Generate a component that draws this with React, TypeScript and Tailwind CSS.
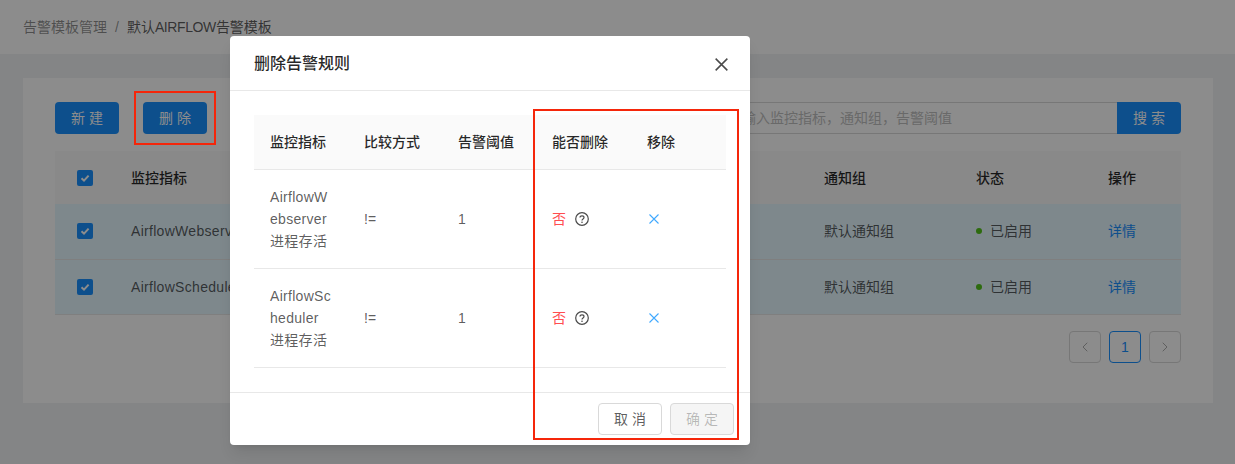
import { ChevronLeft, ChevronRight } from "lucide-react"

const font = { fontFamily: '"Liberation Sans", "Noto Sans CJK SC", sans-serif' }

const pageRows = ["AirflowWebserver", "AirflowScheduler"]

const dialogRows = [
  { lines: ["AirflowW", "ebserver", "进程存活"] },
  { lines: ["AirflowSc", "heduler", "进程存活"] },
]

function Checkbox() {
  return (
    <span className="flex h-4 w-4 items-center justify-center rounded-[2px] bg-[#1890ff]">
      <svg width="12" height="12" viewBox="0 0 12 12" fill="none">
        <path d="M2.5 6.2 5 8.6 9.6 3.6" stroke="white" strokeWidth="2" />
      </svg>
    </span>
  )
}

function HelpIcon() {
  return (
    <svg width="14" height="14" viewBox="0 0 14 14" fill="none" stroke="#4a4a4a" strokeWidth="1.2">
      <circle cx="7" cy="7" r="6.3" />
      <path d="M5 5.6C5 4.5 5.9 3.8 7 3.8s2 .7 2 1.8c0 1.5-2 1.4-2 3" />
      <circle cx="7" cy="10.2" r=".8" fill="#4a4a4a" stroke="none" />
    </svg>
  )
}

function CloseIcon({ size, color, weight }: { size: number; color: string; weight: number }) {
  return (
    <svg width={size} height={size} viewBox="0 0 12 12" fill="none" stroke={color} strokeWidth={weight}>
      <path d="M.6.6 11.4 11.4M11.4.6.6 11.4" />
    </svg>
  )
}

export default function App() {
  return (
    <div className="relative h-[464px] overflow-hidden bg-[#f0f2f5] text-sm text-black/65" style={font}>
      {/* Breadcrumb */}
      <div className="flex h-[54px] items-center bg-white pl-[23px]">
        <span className="text-black/45">告警模板管理</span>
        <span className="mx-2 text-black/45">/</span>
        <span>
          默认<span className="tracking-[-0.4px]">AIRFLOW</span>告警模板
        </span>
      </div>

      {/* Card */}
      <div className="mt-6 ml-[23px] mr-[22px] bg-white px-8 pt-6 pb-10">
        <div className="flex items-center justify-between">
          <div className="flex gap-6">
            <button className="h-8 w-16 rounded bg-[#1890ff] text-white">新 建</button>
            <button className="h-8 w-16 rounded bg-[#1890ff] text-white">删 除</button>
          </div>
          <div className="flex">
            <div className="flex h-8 w-[401px] items-center rounded-l border border-r-0 border-[#d9d9d9] pl-[11px] text-[#bfbfbf]">
              请输入监控指标，通知组，告警阈值
            </div>
            <button className="h-8 w-16 rounded-r bg-[#1890ff] text-white">搜 索</button>
          </div>
        </div>

        <table className="mt-[17px] w-full table-fixed border-collapse">
          <colgroup>
            <col className="w-[60px]" />
            <col />
            <col className="w-[152px]" />
            <col className="w-[132px]" />
            <col className="w-[89px]" />
          </colgroup>
          <thead>
            <tr className="h-[53px] bg-[#fafafa] text-left text-black/85">
              <th className="px-0 font-medium">
                <div className="flex justify-center"><Checkbox /></div>
              </th>
              <th className="px-4 font-medium">监控指标</th>
              <th className="px-4 font-medium">通知组</th>
              <th className="px-4 font-medium">状态</th>
              <th className="px-4 font-medium">操作</th>
            </tr>
          </thead>
          <tbody>
            {pageRows.map((name) => (
              <tr key={name} className="h-[55px] border-b border-[#e8e8e8] bg-[#e6f7ff]">
                <td>
                  <div className="flex justify-center"><Checkbox /></div>
                </td>
                <td className="px-4 tracking-[0.3px]">{name}</td>
                <td className="px-4">默认通知组</td>
                <td className="px-4">
                  <span className="flex items-center gap-2">
                    <span className="h-1.5 w-1.5 rounded-full bg-[#52c41a]" />
                    已启用
                  </span>
                </td>
                <td className="px-4 text-[#1890ff]">详情</td>
              </tr>
            ))}
          </tbody>
        </table>

        <div className="mt-4 flex justify-end gap-2">
          <span className="flex h-8 w-8 items-center justify-center rounded border border-[#d9d9d9] text-black/35">
            <ChevronLeft size={16} strokeWidth={1.4} />
          </span>
          <span className="flex h-8 w-8 items-center justify-center rounded border border-[#1890ff] text-[#1890ff]">1</span>
          <span className="flex h-8 w-8 items-center justify-center rounded border border-[#d9d9d9] text-black/35">
            <ChevronRight size={16} strokeWidth={1.4} />
          </span>
        </div>
      </div>

      {/* Mask */}
      <div className="absolute inset-0 bg-black/45" />

      {/* Dialog */}
      <div className="absolute top-9 left-[230px] w-[520px] rounded bg-white shadow-lg">
        <div className="flex h-[55px] items-center justify-between border-b border-[#e8e8e8] pt-[2px] pl-6 pr-[22px]">
          <span className="text-base font-medium text-black/85">删除告警规则</span>
          <CloseIcon size={13} color="#4a4a4a" weight={1.4} />
        </div>

        <div className="px-6 pt-6 pb-6">
          <table className="w-full table-fixed border-collapse">
            <colgroup>
              <col className="w-[94px]" />
              <col className="w-[94px]" />
              <col className="w-[94px]" />
              <col className="w-[95px]" />
              <col />
            </colgroup>
            <thead>
              <tr className="h-[54px] border-b border-[#e8e8e8] bg-[#fafafa] text-left text-black/85">
                <th className="px-4 font-medium">监控指标</th>
                <th className="px-4 font-medium whitespace-nowrap">比较方式</th>
                <th className="px-4 font-medium whitespace-nowrap">告警阈值</th>
                <th className="px-4 font-medium whitespace-nowrap">能否删除</th>
                <th className="px-4 font-medium">移除</th>
              </tr>
            </thead>
            <tbody>
              {dialogRows.map((row) => (
                <tr key={row.lines[0]} className="h-[99px] border-b border-[#e8e8e8]">
                  <td className="px-4 leading-[22px] tracking-[0.3px]">
                    {row.lines.map((line) => (
                      <div key={line}>{line}</div>
                    ))}
                  </td>
                  <td className="px-4">!=</td>
                  <td className="px-4">1</td>
                  <td className="px-4">
                    <span className="flex items-center gap-[9px]">
                      <span className="text-[#ff4d4f]">否</span>
                      <HelpIcon />
                    </span>
                  </td>
                  <td className="px-4">
                    <span className="flex pl-[2px]"><CloseIcon size={10} color="#40a9ff" weight={1.3} /></span>
                  </td>
                </tr>
              ))}
            </tbody>
          </table>
        </div>

        <div className="flex h-[53px] items-center justify-end gap-2 border-t border-[#e8e8e8] px-4">
          <button className="h-8 w-16 rounded border border-[#d9d9d9] bg-white">取 消</button>
          <button className="h-8 w-16 rounded border border-[#d9d9d9] bg-[#f5f5f5] text-black/25">确 定</button>
        </div>
      </div>

      {/* Red annotation boxes */}
      <div className="absolute top-[91px] left-[134px] h-[54px] w-[82px] border-2 border-[#f5260a]" />
      <div className="absolute top-[109px] left-[533px] h-[331px] w-[206px] border-2 border-[#f5260a]" />
    </div>
  )
}
